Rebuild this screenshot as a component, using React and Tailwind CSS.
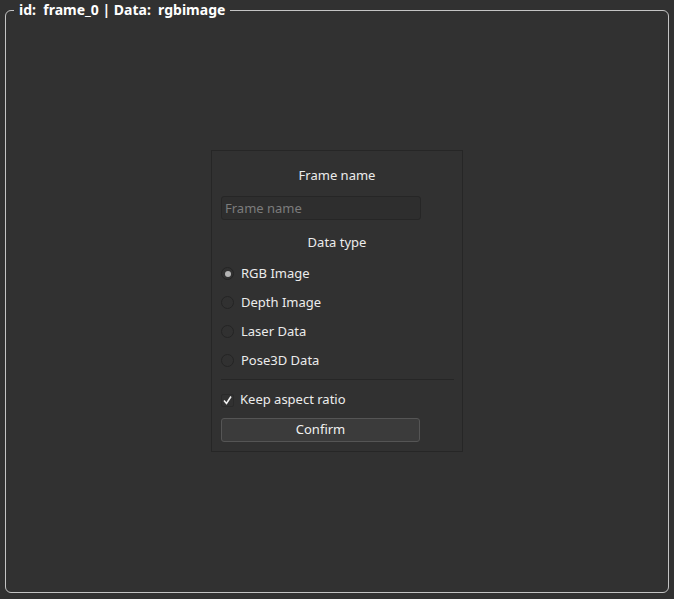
import React, { useState } from 'react'

const dataTypes = ['RGB Image', 'Depth Image', 'Laser Data', 'Pose3D Data']

const Radio = ({ checked }) => (
    <span className="flex items-center justify-center w-[13px] h-[13px] rounded-full border border-[#242424]">
        {checked && <span className="w-[6px] h-[6px] rounded-full bg-[#b4b4b4]" />}
    </span>
)

const App = () => {
    const [dataType, setDataType] = useState('RGB Image')
    const [keepRatio, setKeepRatio] = useState(true)
    const [name, setName] = useState('')

    return (
        <div className="w-[674px] h-[599px] bg-[#313131] pl-[5px] pr-[5px] pt-[2px] pb-[6px] text-[13px] text-[#ececec] font-['Noto_Sans',sans-serif]">
            <fieldset className="h-full border border-[#c4c4c4] rounded-[6px] flex items-center justify-center">
                <legend className="ml-[8px] px-[5px] text-[14px] font-bold leading-[16px] text-white">
                    id:&nbsp; frame_0 | Data:&nbsp; rgbimage
                </legend>

                <div className="w-[252px] flex flex-col border border-[#262626] px-[9px] -mt-[8px]">
                    <div className="mt-[14px] h-[20px] leading-[20px] text-center">Frame name</div>

                    <input
                        className="mt-[11px] h-[24px] w-[200px] rounded-[3px] border border-[#262626] bg-[#2e2e2e] px-[3px] text-[13px] outline-none placeholder-[#7c7c7c]"
                        placeholder="Frame name"
                        value={name}
                        onChange={e => setName(e.target.value)}
                    />

                    <div className="mt-[12px] h-[20px] leading-[20px] text-center">Data type</div>

                    <div className="mt-[7px] flex flex-col">
                        {dataTypes.map(t => (
                            <label key={t} className="h-[29px] flex items-center gap-[7px] cursor-pointer" onClick={() => setDataType(t)}>
                                <Radio checked={dataType === t} />
                                <span>{t}</span>
                            </label>
                        ))}
                    </div>

                    <div className="mt-[4px] h-px bg-[#262626] -mr-px" />

                    <label className="mt-[10px] h-[20px] flex items-center gap-[6px] cursor-pointer" onClick={() => setKeepRatio(!keepRatio)}>
                        <span className="flex items-center justify-center w-[13px] h-[13px] border border-[#2a2a2a] rounded-[2px]">
                            {keepRatio && (
                                <svg width="11" height="11" viewBox="0 0 11 11">
                                    <path d="M2 5.5 L4.5 8.5 L9 1.5" fill="none" stroke="#f0f0f0" strokeWidth="1.6" />
                                </svg>
                            )}
                        </span>
                        <span>Keep aspect ratio</span>
                    </label>

                    <button className="mt-[8px] mb-[9px] h-[24px] w-[199px] rounded-[3px] border border-[#555555] bg-[#3b3b3b] text-[#f0f0f0]">
                        Confirm
                    </button>
                </div>
            </fieldset>
        </div>
    )
}

export default App
